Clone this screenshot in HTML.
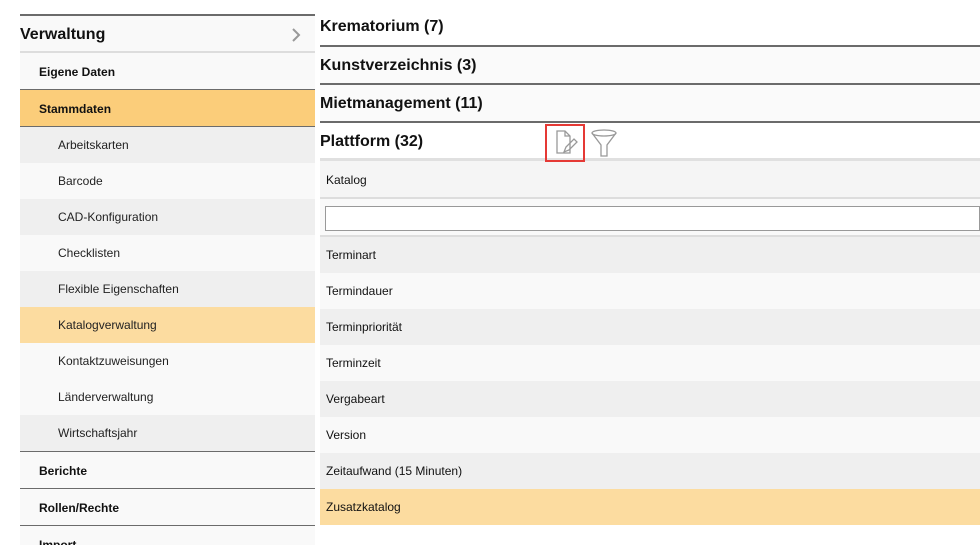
<!DOCTYPE html>
<html><head><meta charset="utf-8"><style>
*{margin:0;padding:0;box-sizing:border-box}
html,body{width:980px;height:545px;overflow:hidden}
body{background:#fff;font-family:"Liberation Sans",Arial,sans-serif;color:#111;position:relative}
.side{position:absolute;left:20px;top:14px;width:295px;border-top:2px solid #6b6b6b}
.side div{height:36px;line-height:36px;font-size:12px;background:#f9f9f9}
.h{font-size:16px!important;font-weight:bold;height:37px!important;line-height:37px!important;border-bottom:2px solid #ddd;position:relative}
.l1{padding-left:19px;font-weight:bold;border-bottom:1px solid #6b6b6b;height:37px!important;line-height:38px!important}
.l2{padding-left:38px;color:#222}
.g{background:#efefef!important}
.sel{background:#fbcd7a!important}
.sel2{background:#fcdca0!important}
.main{position:absolute;left:320px;top:14px;width:660px}
.sec{height:38px;line-height:37px;font-size:16px;font-weight:bold;border-bottom:2px solid #6b6b6b;background:#fafafa;position:relative}
.row{height:36px;line-height:36px;font-size:12px;padding-left:6px;background:#f9f9f9}
</style></head><body>
<div class="side">
<div class="h">Verwaltung<svg style="position:absolute;right:14px;top:11px" width="10" height="16" viewBox="0 0 10 16" fill="none" stroke="#999" stroke-width="2"><path d="M2 2l6 6-6 6"/></svg></div>
<div class="l1">Eigene Daten</div>
<div class="l1 sel">Stammdaten</div>
<div class="l2 g">Arbeitskarten</div>
<div class="l2">Barcode</div>
<div class="l2 g">CAD-Konfiguration</div>
<div class="l2">Checklisten</div>
<div class="l2 g">Flexible Eigenschaften</div>
<div class="l2 sel2">Katalogverwaltung</div>
<div class="l2">Kontaktzuweisungen</div>
<div class="l2">Länderverwaltung</div>
<div class="l2 g" style="border-bottom:1px solid #6b6b6b;height:37px">Wirtschaftsjahr</div>
<div class="l1">Berichte</div>
<div class="l1">Rollen/Rechte</div>
<div class="l1">Import</div>
</div>
<div class="main">
<div class="sec" style="height:33px;line-height:26px;background:#fff">Krematorium (7)</div>
<div class="sec">Kunstverzeichnis (3)</div>
<div class="sec">Mietmanagement (11)</div>
<div class="sec" style="border-bottom:3px solid #e0e0e0;height:38px;background:#fff">Plattform (32)
<div style="position:absolute;left:225px;top:1px;width:40px;height:38px;border:2px solid #e53935"></div>
<svg style="position:absolute;left:234px;top:7px" width="26" height="26" viewBox="0 0 26 26" fill="none" stroke="#999" stroke-width="1.3"><path d="M3 1h8l5 5v17H3z"/><path d="M11 1v5h5"/><path d="M10 22l2-5 8-8 3 3-8 8z"/></svg>
<svg style="position:absolute;left:270px;top:5px" width="28" height="30" viewBox="0 0 28 30" fill="none" stroke="#999" stroke-width="1.3"><ellipse cx="14" cy="5" rx="12" ry="3"/><path d="M2 5l9 12v11h6V17l9-12"/></svg>
</div>
<div class="row" style="height:38px;line-height:38px;font-size:12px;background:#f5f5f5;border-bottom:2px solid #ddd">Katalog</div>
<div style="height:38px;background:#f9f9f9;border-bottom:2px solid #ddd;padding:7px 0 0 5px"><div style="height:25px;background:#fff;border:1px solid #999"></div></div>
<div class="row g">Terminart</div>
<div class="row">Termindauer</div>
<div class="row g">Terminpriorität</div>
<div class="row">Terminzeit</div>
<div class="row g">Vergabeart</div>
<div class="row">Version</div>
<div class="row g">Zeitaufwand (15 Minuten)</div>
<div class="row sel2">Zusatzkatalog</div>
</div>
</body></html>
